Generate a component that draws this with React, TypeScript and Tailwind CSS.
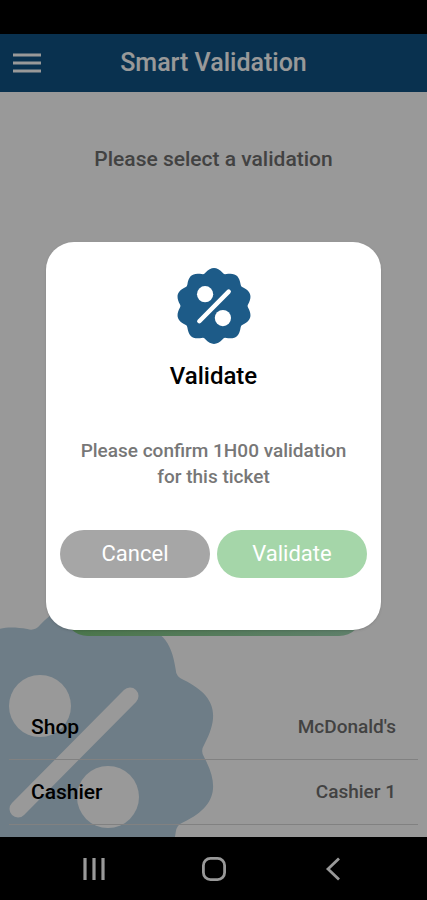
import { useState } from "react";

const LOBES = 10;

// Contorno del sello: una curva por lóbulo y una muesca suave entre ellos
function sealPath() {
  const step = (Math.PI * 2) / LOBES;
  const point = (radial: number, side: number, angle: number) => {
    const x = 145 + radial * Math.cos(angle) - side * Math.sin(angle);
    const y = 145 + radial * Math.sin(angle) + side * Math.cos(angle);
    return `${x.toFixed(1)} ${y.toFixed(1)}`;
  };
  let d = `M${point(126, -34, step / 2)}`;
  for (let i = 0; i < LOBES; i++) {
    const mid = step * (i + 0.5);
    d += `C${point(151, -10, mid)} ${point(151, 10, mid)} ${point(126, 34, mid)}`;
    d += `Q${point(126, 0, mid + step / 2)} ${point(126, -34, mid + step)}`;
  }
  return d + "Z";
}

const SEAL = sealPath();

type SealProps = {
  className: string;
  mark: string;
};

function PercentSeal({ className, mark }: SealProps) {
  return (
    <svg viewBox="0 0 290 290" className={className} aria-hidden="true">
      <path d={SEAL} fill="currentColor" />
      <g fill={mark} stroke={mark}>
        <circle cx="111" cy="100" r="31" stroke="none" />
        <circle cx="179" cy="191" r="31" stroke="none" />
        <path d="M89 203 201 90" strokeWidth="17" strokeLinecap="round" />
      </g>
    </svg>
  );
}

const details = [
  { label: "Shop", value: "McDonald's" },
  { label: "Cashier", value: "Cashier 1" },
];

export default function App() {
  const [open, setOpen] = useState(true);

  return (
    <div className="min-h-screen flex flex-col bg-black pt-[34px] font-[Roboto,sans-serif]">
      <div className="relative flex-1 flex flex-col overflow-hidden bg-white">
        <PercentSeal
          className="absolute -left-[71px] -bottom-[59px] size-[290px] text-[#b8d1e1]"
          mark="#ffffff"
        />

        {/* HEADER */}
        <header className="grid grid-cols-[40px_1fr_40px] items-center h-[58px] px-3 bg-[#105384] text-white">
          <button type="button" className="py-2">
            <svg viewBox="0 0 30 20" className="w-[30px] h-5" stroke="currentColor" strokeWidth="3">
              <path d="M1 2h28M1 10h28M1 18h28" />
            </svg>
          </button>
          <h1 className="text-center text-[25px] leading-8 font-medium">Smart Validation</h1>
        </header>

        {/* CONTENIDO */}
        <main className="relative flex-1 flex flex-col">
          <p className="mt-[53px] text-center text-[21px] leading-7 font-medium text-[#6f6f6f]">
            Please select a validation
          </p>
          <div className="mt-auto mx-[64px] mb-[59px] h-12 rounded-full bg-linear-to-r from-[#7cc47c] to-[#a0d6b4]" />
          <dl className="px-[9px] pb-3">
            {details.map((item) => (
              <div
                key={item.label}
                className="flex items-center justify-between h-[65px] px-[22px] border-b border-[#d8d8d8]"
              >
                <dt className="text-[21px] leading-7 font-medium text-black">{item.label}</dt>
                <dd className="text-[19px] font-medium text-[#6f6f6f]">{item.value}</dd>
              </div>
            ))}
          </dl>
        </main>

        {/* MODAL */}
        {open && (
          <div className="absolute inset-0 flex items-center justify-center px-[46px] bg-black/40">
            <div
              role="dialog"
              className="w-full max-w-md flex flex-col items-center rounded-[28px] bg-white px-[14px] pt-[26px] pb-[52px] shadow-sm"
            >
              <PercentSeal className="size-[76px] text-[#1d5b88]" mark="#ffffff" />
              <h2 className="mt-4 text-2xl font-medium text-black">Validate</h2>
              <p className="mt-[46px] px-5 text-center text-[19px] leading-[26px] font-medium text-[#777777]">
                Please confirm 1H00 validation for this ticket
              </p>
              <div className="mt-10 w-full grid grid-cols-2 gap-[7px] text-[22px] text-white">
                <button
                  type="button"
                  onClick={() => setOpen(false)}
                  className="h-12 rounded-full bg-[#a6a6a6]"
                >
                  Cancel
                </button>
                <button
                  type="button"
                  onClick={() => setOpen(false)}
                  className="h-12 rounded-full bg-[#a5d6a9]"
                >
                  Validate
                </button>
              </div>
            </div>
          </div>
        )}
      </div>

      {/* BARRA DEL SISTEMA */}
      <nav className="flex items-center justify-center gap-24 h-[63px] text-[#999999]">
        <button type="button">
          <svg viewBox="0 0 24 24" className="size-6" fill="none" stroke="currentColor" strokeWidth="3.2">
            <path d="M3 1v22M12 1v22M21 1v22" />
          </svg>
        </button>
        <button type="button">
          <svg viewBox="0 0 24 24" className="size-6" fill="none" stroke="currentColor" strokeWidth="2.8">
            <rect x="1.4" y="1.4" width="21.2" height="21.2" rx="7" />
          </svg>
        </button>
        <button type="button">
          <svg viewBox="0 0 24 24" className="size-6" fill="none" stroke="currentColor" strokeWidth="2.8">
            <path d="M17 1.5 6 12l11 10.5" />
          </svg>
        </button>
      </nav>
    </div>
  );
}
